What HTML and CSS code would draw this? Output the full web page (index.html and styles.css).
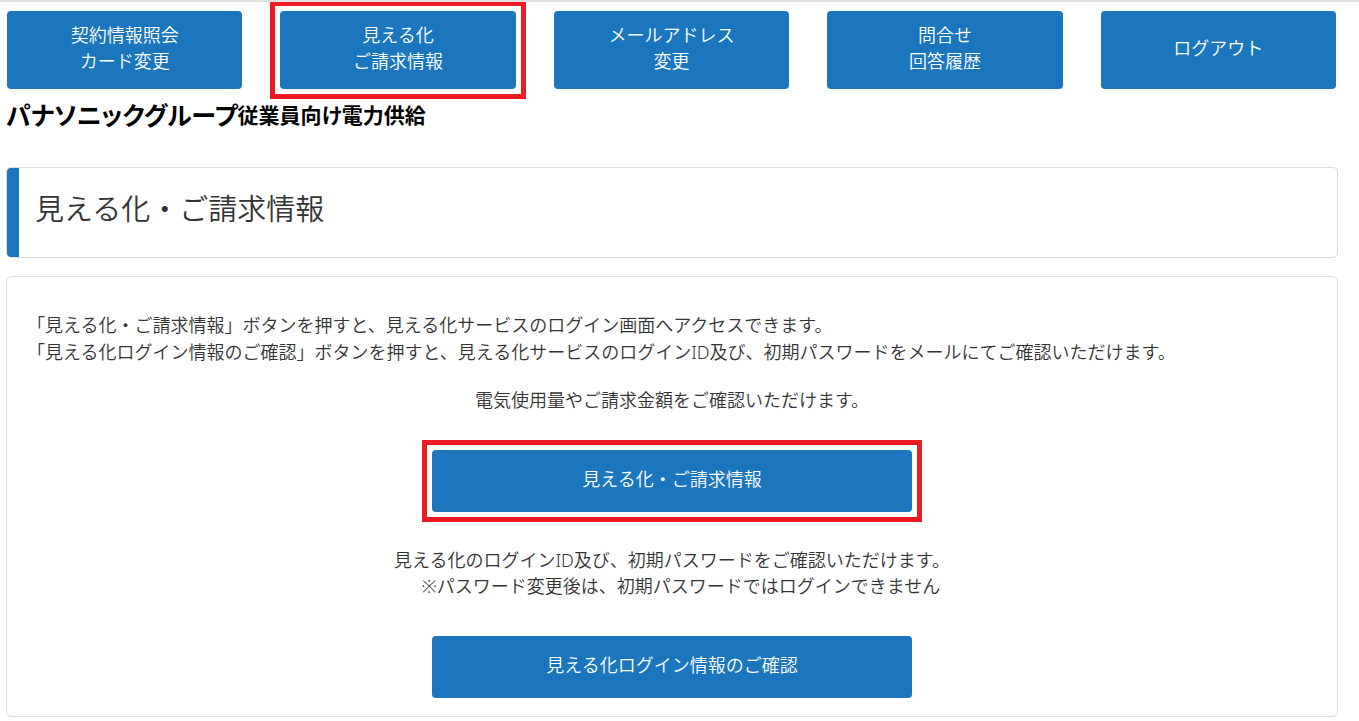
FILE: index.html
```html
<!DOCTYPE html>
<html lang="ja">

<head>
    <meta charset="UTF-8">
    <meta name="viewport" content="width=device-width, initial-scale=1.0">
    <title>見える化・ご請求情報</title>
    <link rel="stylesheet" href="styles.css">
</head>

<body>
    <div class="container">
        <nav class="menu">
            <button type="button" class="btn">契約情報照会<br>カード変更</button>
            <button type="button" class="btn marked">見える化<br>ご請求情報</button>
            <button type="button" class="btn">メールアドレス<br>変更</button>
            <button type="button" class="btn">問合せ<br>回答履歴</button>
            <button type="button" class="btn">ログアウト</button>
        </nav>

        <div class="logo">パナソニックグループ<span class="logo-sub">従業員向け電力供給</span></div>

        <h1 class="title">見える化・ご請求情報</h1>

        <div class="panel">
            <p class="lead">「見える化・ご請求情報」ボタンを押すと、見える化サービスのログイン画面へアクセスできます。<br>「見える化ログイン情報のご確認」ボタンを押すと、見える化サービスのログインID及び、初期パスワードをメールにてご確認いただけます。</p>

            <p class="note">電気使用量やご請求金額をご確認いただけます。</p>
            <button type="button" class="btn btn-wide marked">見える化・ご請求情報</button>

            <p class="note">見える化のログインID及び、初期パスワードをご確認いただけます。<br>&#12288;※パスワード変更後は、初期パスワードではログインできません</p>
            <button type="button" class="btn btn-wide">見える化ログイン情報のご確認</button>
        </div>
    </div>
</body>

</html>
```
FILE: styles.css
```css
* {
    padding: 0;
    margin: 0;
    box-sizing: border-box;
}

body {
    background: #fff;
    border-top: 2px solid #e1e1e1;
    color: #333;
    font-family: "Noto Sans", "Noto Sans CJK JP", sans-serif;
    font-size: 18px;
    font-weight: 350;
    line-height: 27px;
}

.container {
    padding: 9px 21px 4px 6px;
}

.menu {
    display: grid;
    grid-template-columns: repeat(5, 1fr);
    gap: 38px;
    padding: 0 2px 0 1px;
}

.btn {
    position: relative;
    height: 78px;
    padding-bottom: 4px;
    border: none;
    border-radius: 4px;
    background: #1b76bd;
    color: #fff;
    font: inherit;
    line-height: 26px;
    cursor: pointer;
}

.btn:hover {
    background: #16639f;
}

/* red frame round the button */
.marked::after {
    content: "";
    position: absolute;
    inset: -10px;
    border: 5px solid #ed1c24;
    pointer-events: none;
}

.logo {
    display: flex;
    align-items: center;
    margin-top: 8px;
    color: #000;
    font-size: 25px;
    font-weight: 700;
    line-height: 36px;
    font-feature-settings: "palt";
}

.logo-sub {
    font-size: 21px;
}

.title {
    margin-top: 34px;
    padding: 19px 28px 27px;
    border: 1px solid #ddd;
    border-radius: 5px;
    background: linear-gradient(to right, #1b76bd 12px, #fff 12px);
    font-size: 29px;
    font-weight: 350;
    line-height: 43px;
}

.panel {
    display: flex;
    flex-direction: column;
    align-items: center;
    margin-top: 18px;
    padding: 35px 29px 18px;
    border: 1px solid #ddd;
    border-radius: 5px;
}

.lead {
    width: 100%;
    margin-bottom: 21px;
    text-spacing-trim: trim-start;
}

.note {
    margin-bottom: 37px;
    line-height: 26px;
    text-align: center;
}

.btn-wide {
    width: 100%;
    max-width: 480px;
    height: 62px;
}

.btn-wide + .note {
    margin-top: 35px;
}
```
